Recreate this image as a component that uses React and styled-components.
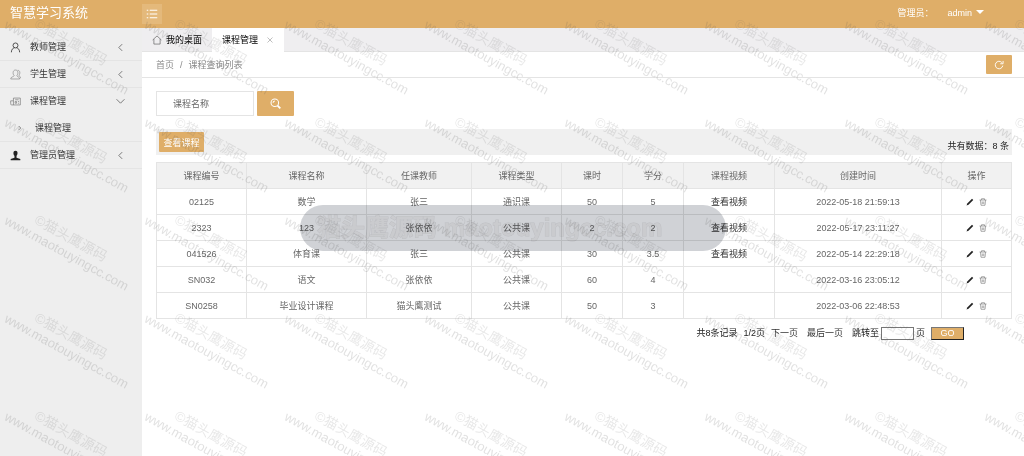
import React, { Component } from 'react';
import styled, { createGlobalStyle } from 'styled-components';

const GlobalStyle = createGlobalStyle`
	* {
		box-sizing: border-box;
	}
	body {
		margin: 0;
		background: #fff;
		color: #333;
		font-family: "Liberation Sans", "Noto Sans CJK SC", sans-serif;
		font-size: 9px;
		line-height: 14px;
	}
	button, input {
		font-family: inherit;
		font-size: 9px;
	}
	a {
		color: inherit;
		text-decoration: none;
	}
`;

const Page = styled.div`
	position: relative;
	display: flex;
	flex-direction: column;
	min-height: 100vh;
	overflow: hidden;
	background: #fff;
`;

const Header = styled.header`
	display: flex;
	align-items: center;
	height: 28px;
	padding-right: 40px;
	background: #dfae68;
	color: #fff;
`;

const Logo = styled.h1`
	width: 142px;
	margin: 0;
	padding: 0 10px 2px;
	font-size: 13px;
	font-weight: normal;
	line-height: 20px;
`;

const MenuToggle = styled.button`
	display: flex;
	align-items: center;
	justify-content: center;
	width: 20px;
	height: 20px;
	padding: 0;
	border: 0;
	background: #e4b97b;
	color: #fff;
`;

const UserBox = styled.div`
	display: flex;
	align-items: center;
	gap: 14px;
	margin-left: auto;
	padding-bottom: 2px;
`;

const UserButton = styled.button`
	display: flex;
	align-items: flex-start;
	gap: 4px;
	padding: 0;
	border: 0;
	background: none;
	color: #fff;
`;

const Body = styled.div`
	display: flex;
	flex: 1;
`;

const Sidebar = styled.nav`
	width: 142px;
	padding-top: 6px;
	background: #eee;
`;

const SideItem = styled.a`
	display: flex;
	align-items: center;
	height: 27px;
	padding: 0 17px 0 10px;
	border-bottom: 1px solid ${props => props.$open ? 'transparent' : '#e4e4e4'};
	color: #333;
	> span {
		flex: 1;
		margin-left: 9px;
	}
`;

const SubItem = styled.a`
	display: flex;
	align-items: center;
	gap: 12px;
	height: 27px;
	padding-left: 17px;
	border-bottom: 1px solid #e4e4e4;
	color: #333;
`;

const Main = styled.main`
	flex: 1;
	min-width: 0;
`;

const Tabs = styled.div`
	display: flex;
	height: 24px;
	border-bottom: 1px solid #e4e4e4;
	background: #efeef0;
`;

const Tab = styled.a`
	display: flex;
	align-items: center;
	gap: ${props => props.$active ? 8 : 4}px;
	height: 24px;
	padding: 0 10px;
	background: ${props => props.$active ? '#fff' : 'transparent'};
	color: #000;
`;

const CrumbBar = styled.div`
	display: flex;
	align-items: center;
	justify-content: space-between;
	height: 26px;
	padding: 0 12px 0 14px;
	border-bottom: 1px solid #e4e4e4;
	color: #888;
`;

const Crumbs = styled.div`
	display: flex;
	gap: 6px;
`;

const GoldButton = styled.button`
	display: inline-flex;
	align-items: center;
	justify-content: center;
	width: ${props => props.$width}px;
	height: ${props => props.$height}px;
	padding: 0;
	border: 0;
	border-radius: 1px;
	background: #dfae68;
	color: #fff;
`;

const Content = styled.div`
	padding: 13px 12px 0 14px;
`;

const SearchForm = styled.form`
	display: flex;
	gap: 3px;
`;

const SearchInput = styled.input`
	width: 98px;
	height: 25px;
	padding: 0 16px;
	border: 1px solid #e4e4e4;
	outline: none;
	&::placeholder {
		color: #666;
		opacity: 1;
	}
`;

const Toolbar = styled.div`
	display: flex;
	justify-content: space-between;
	height: 26px;
	margin: 13px 0 7px;
	padding: 3px 3px 0;
	background: #f0f0f0;
	color: #222;
`;

const Total = styled.span`
	padding-top: 7px;
`;

const Table = styled.table`
	width: 100%;
	table-layout: fixed;
	border-collapse: collapse;
	color: #666;
	th, td {
		height: 26px;
		padding: 0;
		border: 1px solid #e4e4e4;
		font-weight: normal;
		text-align: center;
	}
	th {
		background: #f1f1f1;
	}
	td a {
		color: #333;
	}
`;

const Actions = styled.div`
	display: flex;
	justify-content: center;
	gap: 5px;
`;

const IconButton = styled.button`
	display: flex;
	padding: 0;
	border: 0;
	background: none;
	color: ${props => props.$dark ? '#222' : '#888'};
`;

const Pager = styled.form`
	display: flex;
	align-items: center;
	justify-content: flex-end;
	gap: 6px;
	padding: 7px 48px 0 0;
	color: #222;
`;

const PageLink = styled.a`
	margin-right: 3px;
	color: #333;
`;

const JumpLabel = styled.label`
	display: flex;
	align-items: center;
	gap: 2px;
`;

const JumpInput = styled.input`
	width: 33px;
	height: 13px;
	padding: 0 2px;
	border: 1px solid #777;
`;

const GoButton = styled.button`
	width: 33px;
	height: 13px;
	padding: 0;
	border: 1px solid;
	border-color: #777 #222 #222 #777;
	background: #dfae68;
	color: #fff;
	line-height: 10px;
`;

const WatermarkLayer = styled.div`
	position: absolute;
	top: 0;
	left: 0;
	display: grid;
	grid-template-columns: repeat(8, 140px);
	grid-auto-rows: 98px;
	padding: 0 0 0 2px;
	pointer-events: none;
`;

const Watermark = styled.div`
	width: 140px;
	color: rgba(90, 90, 90, 0.18);
	font-size: 13px;
	line-height: 15px;
	white-space: nowrap;
	transform: rotate(29deg);
	transform-origin: 0 100%;
	align-self: start;
	> div {
		padding-left: 26px;
		color: rgba(90, 90, 90, 0.14);
		font-size: 14px;
	}
`;

const Banner = styled.div`
	position: absolute;
	top: 205px;
	left: 300px;
	width: 426px;
	height: 46px;
	padding-left: 17px;
	border-radius: 23px;
	background: #d0d2d6;
	color: #cacbce;
	font-size: 24px;
	font-weight: bold;
	line-height: 46px;
	white-space: nowrap;
	-webkit-text-stroke: 1px #bebfc3;
	paint-order: stroke fill;
	mix-blend-mode: multiply;
	pointer-events: none;
`;

const icons = {
	user: <g><circle cx="8" cy="5" r="3.6" /><path d="M2 15c0-4 2-6 4.500-6.500M14 15c0-4-2-6-4.500-6.500" /></g>,
	users: <g><path d="M6 9.500C4 8 3.500 1.500 8 1.500s4 6.500 2 8c0 2 4 1.500 4 5H1c0-3.500 5-3 5-5zM11 2c4-.5 4 5 2 7 0 1.500 2.500 1.500 2.500 4.500" /></g>,
	course: <g><path d="M5 3h10v10H2.500C1 13 1 12 1 11V7h4zM5 7v6M7.500 5.500h5M7.500 8h2v2.500h-2zM11.500 8h1.500M11.500 10.500h1.500" /></g>,
	admin: <path fill="currentColor" d="M8 1c4 0 3.500 5 1.500 7.500v2.800L15 13v2H1v-2l5.500-1.700V8.500C4.500 6 4 1 8 1z" />,
	left: <path d="M11 2L5 8l6 6" />,
	down: <path d="M1 4l7 7 7-7" />,
	right: <path d="M5 3l5 5-5 5" />,
	home: <path d="M1 8l7-6.500L15 8M3 6.500V14.500h10V6.500" />,
	close: <path d="M3 3l10 10M13 3L3 13" />,
	menu: <path d="M1 3h2M5 3h10M1 8h2M5 8h10M1 13h2M5 13h10" />,
	search: <g><circle cx="7" cy="7" r="5.500" /><path d="M4.500 7A2.500 2.500 0 0 1 7 4.500" /><path strokeWidth="2.500" d="M11 11l4 4" /></g>,
	refresh: <path d="M14 9A6 6 0 1 1 12.500 4M14.500 1.500V6H10" />,
	pencil: <path fill="currentColor" d="M1 15l1.500-4L12 1.500l2.500 2.500L5 13.500z" />,
	trash: <path d="M1 4h14M5 4V1.500h6V4M3 4l1 10.500h8L13 4M6.500 7v5M9.500 7v5" />,
	caret: <path fill="currentColor" stroke="none" d="M0 4h16L8 12z" />,
};

const Icon = ({ name, size = 10, color, weight = 1.5 }) => (
	<svg
		width={size}
		height={size}
		viewBox="0 0 16 16"
		fill="none"
		stroke="currentColor"
		strokeWidth={weight}
		color={color}
		aria-hidden="true"
	>
		{icons[name]}
	</svg>
);

const columns = [
	{ title: '课程编号', width: 90 },
	{ title: '课程名称', width: 120 },
	{ title: '任课教师', width: 105 },
	{ title: '课程类型', width: 90 },
	{ title: '课时', width: 61 },
	{ title: '学分', width: 61 },
	{ title: '课程视频', width: 91 },
	{ title: '创建时间', width: 167 },
	{ title: '操作', width: 70 },
];

const courses = [
	{ id: '02125', name: '数学', teacher: '张三', type: '通识课', hours: 50, credit: 5, video: true, created: '2022-05-18 21:59:13' },
	{ id: '2323', name: '123', teacher: '张依依', type: '公共课', hours: 2, credit: 2, video: true, created: '2022-05-17 23:11:27' },
	{ id: '041526', name: '体育课', teacher: '张三', type: '公共课', hours: 30, credit: 3.5, video: true, created: '2022-05-14 22:29:18' },
	{ id: 'SN032', name: '语文', teacher: '张依依', type: '公共课', hours: 60, credit: 4, video: false, created: '2022-03-16 23:05:12' },
	{ id: 'SN0258', name: '毕业设计课程', teacher: '猫头鹰测试', type: '公共课', hours: 50, credit: 3, video: false, created: '2022-03-06 22:48:53' },
];

const totalWidth = columns.reduce((acc, item) => acc + item.width, 0);

class App extends Component {
	constructor(props) {
		super(props);

		this.state = {
			search: "",
			page: "",
		}
	}

	change(e, prop) {
		this.setState({ [prop]: e.target.value })
	}

	renderSidebar() {
		return (
			<Sidebar>
				<SideItem href="#teachers">
					<Icon name="user" size={11} weight={1.2} />
					<span>教师管理</span>
					<Icon name="left" size={9} color="#666" />
				</SideItem>
				<SideItem href="#students">
					<Icon name="users" size={11} color="#888" weight={1} />
					<span>学生管理</span>
					<Icon name="left" size={9} color="#666" />
				</SideItem>
				<SideItem href="#courses" $open>
					<Icon name="course" size={11} color="#777" weight={1} />
					<span>课程管理</span>
					<Icon name="down" size={9} color="#666" />
				</SideItem>
				<SubItem href="#course-list">
					<Icon name="right" size={6} color="#666" weight={2} />
					课程管理
				</SubItem>
				<SideItem href="#admins">
					<Icon name="admin" size={11} color="#222" weight={0} />
					<span>管理员管理</span>
					<Icon name="left" size={9} color="#666" />
				</SideItem>
			</Sidebar>
		);
	}

	renderTable() {
		return (
			<Table>
				<colgroup>
					{columns.map(item => (
						<col key={item.title} style={{ width: `${item.width / totalWidth * 100}%` }} />
					))}
				</colgroup>
				<thead>
					<tr>
						{columns.map(item => <th key={item.title}>{item.title}</th>)}
					</tr>
				</thead>
				<tbody>
					{courses.map(item => (
						<tr key={item.id}>
							<td>{item.id}</td>
							<td>{item.name}</td>
							<td>{item.teacher}</td>
							<td>{item.type}</td>
							<td>{item.hours}</td>
							<td>{item.credit}</td>
							<td>{item.video && <a href="#video">查看视频</a>}</td>
							<td>{item.created}</td>
							<td>
								<Actions>
									<IconButton type="button" aria-label="编辑" $dark><Icon name="pencil" size={8} weight={0} /></IconButton>
									<IconButton type="button" aria-label="删除"><Icon name="trash" size={8} /></IconButton>
								</Actions>
							</td>
						</tr>
					))}
				</tbody>
			</Table>
		);
	}

	render() {
		const { search, page } = this.state;

		return (
			<Page>
				<GlobalStyle />
				<Header>
					<Logo>智慧学习系统</Logo>
					<MenuToggle type="button" aria-label="菜单"><Icon name="menu" size={12} /></MenuToggle>
					<UserBox>
						<span>管理员：</span>
						<UserButton type="button">admin<Icon name="caret" size={8} /></UserButton>
					</UserBox>
				</Header>
				<Body>
					{this.renderSidebar()}
					<Main>
						<Tabs>
							<Tab href="#desktop"><Icon name="home" size={10} color="#555" weight={1} />我的桌面</Tab>
							<Tab href="#course-list" $active>课程管理<Icon name="close" size={8} color="#aaa" /></Tab>
						</Tabs>
						<CrumbBar>
							<Crumbs>
								<a href="#home">首页</a>
								<span>/</span>
								<a href="#course-list">课程查询列表</a>
							</Crumbs>
							<GoldButton type="button" aria-label="刷新" $width={26} $height={19}><Icon name="refresh" size={10} /></GoldButton>
						</CrumbBar>
						<Content>
							<SearchForm onSubmit={e => e.preventDefault()}>
								<SearchInput
									aria-label="课程名称"
									placeholder="课程名称"
									value={search}
									onChange={e => this.change(e, 'search')}
								/>
								<GoldButton type="submit" aria-label="搜索" $width={37} $height={25}><Icon name="search" size={11} /></GoldButton>
							</SearchForm>
							<Toolbar>
								<GoldButton type="button" $width={45} $height={20}>查看课程</GoldButton>
								<Total>共有数据：8 条</Total>
							</Toolbar>
							{this.renderTable()}
							<Pager onSubmit={e => e.preventDefault()}>
								<span>共8条记录</span>
								<span>1/2页</span>
								<PageLink href="#next">下一页</PageLink>
								<PageLink href="#last">最后一页</PageLink>
								<JumpLabel>
									跳转至
									<JumpInput value={page} onChange={e => this.change(e, 'page')} />
									页
								</JumpLabel>
								<GoButton type="submit">GO</GoButton>
							</Pager>
						</Content>
					</Main>
				</Body>
				<Banner>猫头鹰源码 maotouyingcc.com</Banner>
				<WatermarkLayer aria-hidden="true">
					{Array.from({ length: 40 }, (item, index) => (
						<Watermark key={index}>
							<div>©猫头鹰源码</div>
							www.maotouyingcc.com
						</Watermark>
					))}
				</WatermarkLayer>
			</Page>
		);
	}
}

export default App;
